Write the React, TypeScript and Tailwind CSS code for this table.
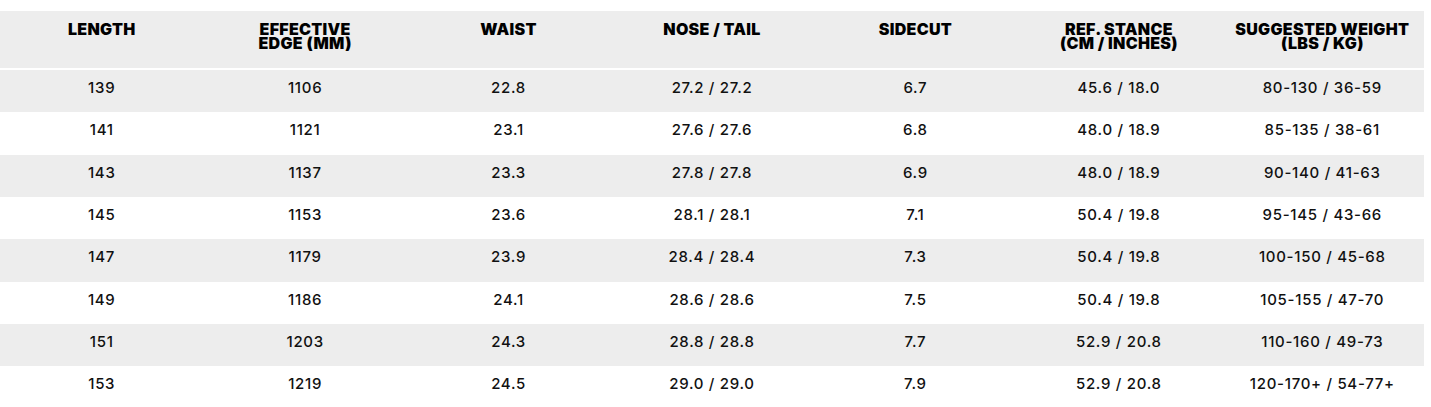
import React from "react";

const headers: string[][] = [
  ["LENGTH"],
  ["EFFECTIVE", "EDGE (MM)"],
  ["WAIST"],
  ["NOSE / TAIL"],
  ["SIDECUT"],
  ["REF. STANCE", "(CM / INCHES)"],
  ["SUGGESTED WEIGHT", "(LBS / KG)"],
];

const rows: string[][] = [
  ["139", "1106", "22.8", "27.2 / 27.2", "6.7", "45.6 / 18.0", "80-130 / 36-59"],
  ["141", "1121", "23.1", "27.6 / 27.6", "6.8", "48.0 / 18.9", "85-135 / 38-61"],
  ["143", "1137", "23.3", "27.8 / 27.8", "6.9", "48.0 / 18.9", "90-140 / 41-63"],
  ["145", "1153", "23.6", "28.1 / 28.1", "7.1", "50.4 / 19.8", "95-145 / 43-66"],
  ["147", "1179", "23.9", "28.4 / 28.4", "7.3", "50.4 / 19.8", "100-150 / 45-68"],
  ["149", "1186", "24.1", "28.6 / 28.6", "7.5", "50.4 / 19.8", "105-155 / 47-70"],
  ["151", "1203", "24.3", "28.8 / 28.8", "7.7", "52.9 / 20.8", "110-160 / 49-73"],
  ["153", "1219", "24.5", "29.0 / 29.0", "7.9", "52.9 / 20.8", "120-170+ / 54-77+"],
];

export default function App() {
  return (
    <div
      className="w-full h-[407px] overflow-hidden bg-white pt-[11px] text-[#111]"
      style={{ fontFamily: "Inter, 'Noto Sans', sans-serif" }}
    >
      <div className="w-[1424px]">
        <div className="grid grid-cols-7 h-[57px] bg-[#ededed] pt-[11px]">
          {headers.map((h, i) => (
            <div
              key={i}
              className="flex flex-col items-center text-center text-[16px] leading-[14px] font-black tracking-[0.3px] text-black"
            >
              {h.map((line, j) => (
                <span key={j} className="whitespace-nowrap">
                  {line}
                </span>
              ))}
            </div>
          ))}
        </div>
        <div className="mt-[2px]">
          {rows.map((r, i) => (
            <div
              key={i}
              className={`grid grid-cols-7 h-[42.33px] pt-[8px] ${
                i % 2 === 0 ? "bg-[#ededed]" : "bg-white"
              }`}
            >
              {r.map((c, j) => (
                <div
                  key={j}
                  className="text-center text-[15px] leading-[20px] font-medium tracking-[0.7px] whitespace-nowrap"
                >
                  {c}
                </div>
              ))}
            </div>
          ))}
        </div>
      </div>
    </div>
  );
}
